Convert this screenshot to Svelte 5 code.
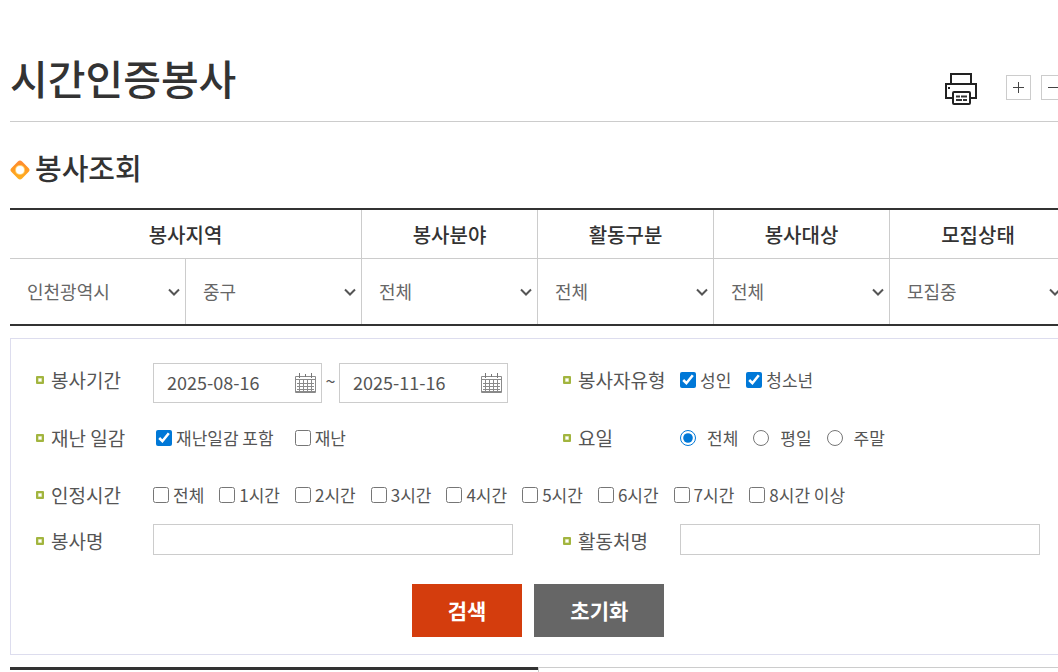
<script>
  const groups = [
    { title: '봉사지역', span: 2 },
    { title: '봉사분야', span: 1 },
    { title: '활동구분', span: 1 },
    { title: '봉사대상', span: 1 },
    { title: '모집상태', span: 1 }
  ]

  const filters = [
    { label: '시도', value: '인천광역시' },
    { label: '시군구', value: '중구' },
    { label: '봉사분야', value: '전체' },
    { label: '활동구분', value: '전체' },
    { label: '봉사대상', value: '전체' },
    { label: '모집상태', value: '모집중' }
  ]

  const hours = ['전체', '1시간', '2시간', '3시간', '4시간', '5시간', '6시간', '7시간', '8시간 이상']
  const days = ['전체', '평일', '주말']

  let startDate = $state('2025-08-16')
  let endDate = $state('2025-11-16')
  let day = $state('전체')
  let activityName = $state('')
  let placeName = $state('')
</script>

{#snippet bullet()}
  <svg width="8" height="8" viewBox="0 0 8 8" aria-hidden="true">
    <rect width="8" height="8" rx="1" fill="#a2b53f" />
    <rect x="2" y="2" width="4" height="4" rx="1" fill="#dfe6b8" />
    <rect x="3" y="3" width="2" height="2" fill="#fff" />
  </svg>
{/snippet}

{#snippet calendar()}
  <svg width="21" height="20" viewBox="0 0 21 20" fill="none" stroke="#8a8a8a" aria-hidden="true">
    <path d="M0.5 3.5h20v16h-20z" />
    <path d="M0 6.5h21M2 10.5h17M2 13.5h17M2 16.5h17M0 18.5h21" />
    <path d="M4.5 7v12M8.5 7v12M12.5 7v12M16.5 7v12" />
    <path d="M4.5 0v5M16.5 0v5M10.5 1v3" stroke="#777" />
  </svg>
{/snippet}

{#snippet check(text, checked)}
  <label class="choice">
    <input type="checkbox" {checked} />
    <span>{text}</span>
  </label>
{/snippet}

<div class="page">
  <main>
    <header>
      <h1>시간인증봉사</h1>
      <div class="tools">
        <button class="print" aria-label="인쇄">
          <svg width="34" height="38" viewBox="0 0 34 38" fill="none" stroke="#222" stroke-width="2" aria-hidden="true">
            <path d="M7 16V6h20v10" />
            <path d="M8 30H2V16h30v14h-6" />
            <rect x="9" y="24" width="17" height="12" rx="1" />
            <path d="M4 20h2" />
            <path d="M12 28.5h4M17 28.5h6M12 32h6M19 32h4" stroke="#333" />
          </svg>
        </button>
        <button class="zoom" aria-label="확대">
          <svg width="13" height="13" viewBox="0 0 13 13" stroke="#444" aria-hidden="true">
            <path d="M1 6.5h11M6.5 1v11" />
          </svg>
        </button>
        <button class="zoom" aria-label="축소">
          <svg width="13" height="13" viewBox="0 0 13 13" stroke="#444" aria-hidden="true">
            <path d="M1 6.5h11" />
          </svg>
        </button>
      </div>
    </header>

    <h2>
      <svg width="20" height="20" viewBox="0 0 20 20" aria-hidden="true">
        <defs>
          <linearGradient id="diamond" x1="0" y1="0" x2="1" y2="1">
            <stop offset="0" stop-color="#ff8a3c" />
            <stop offset="0.3" stop-color="#ff9226" />
            <stop offset="1" stop-color="#ffb41e" />
          </linearGradient>
        </defs>
        <rect x="2.5" y="2.5" width="15" height="15" rx="3" transform="rotate(45 10 10)" fill="url(#diamond)" />
        <circle cx="10" cy="10" r="5" fill="#ffd66e" />
        <circle cx="10" cy="10" r="4" fill="#fff" />
      </svg>
      봉사조회
    </h2>

    <table>
      <thead>
        <tr>
          {#each groups as group}
            <th colspan={group.span} scope="colgroup">{group.title}</th>
          {/each}
        </tr>
      </thead>
      <tbody>
        <tr>
          {#each filters as filter}
            <td>
              <div class="select">
                <select aria-label={filter.label}>
                  <option>{filter.value}</option>
                </select>
                <svg width="12" height="8" viewBox="0 0 12 8" fill="none" stroke="#555" stroke-width="2" aria-hidden="true">
                  <path d="M1 1.5l5 5 5-5" />
                </svg>
              </div>
            </td>
          {/each}
        </tr>
      </tbody>
    </table>

    <form onsubmit={(e) => e.preventDefault()}>
      <div class="row dates">
        <div class="field">
          <label class="name" for="start">{@render bullet()}봉사기간</label>
          <div class="period">
            <div class="date">
              <input id="start" type="text" bind:value={startDate} />
              <button type="button" aria-label="시작일 선택">{@render calendar()}</button>
            </div>
            <span class="tilde">~</span>
            <div class="date">
              <input type="text" aria-label="종료일" bind:value={endDate} />
              <button type="button" aria-label="종료일 선택">{@render calendar()}</button>
            </div>
          </div>
        </div>
        <div class="field" role="group" aria-labelledby="type">
          <span class="name" id="type">{@render bullet()}봉사자유형</span>
          <div class="choices">
            {@render check('성인', true)}
            {@render check('청소년', true)}
          </div>
        </div>
      </div>

      <div class="row disaster">
        <div class="field" role="group" aria-labelledby="disaster">
          <span class="name" id="disaster">{@render bullet()}재난 일감</span>
          <div class="choices inset">
            {@render check('재난일감 포함', true)}
            {@render check('재난', false)}
          </div>
        </div>
        <div class="field" role="group" aria-labelledby="day">
          <span class="name" id="day">{@render bullet()}요일</span>
          <div class="choices">
            {#each days as item}
              <label class="choice radio">
                <input type="radio" name="day" value={item} bind:group={day} />
                <span>{item}</span>
              </label>
            {/each}
          </div>
        </div>
      </div>

      <div class="field hours" role="group" aria-labelledby="hours">
        <span class="name" id="hours">{@render bullet()}인정시간</span>
        <div class="choices">
          {#each hours as hour}
            {@render check(hour, false)}
          {/each}
        </div>
      </div>

      <div class="row">
        <div class="field">
          <label class="name" for="activity">{@render bullet()}봉사명</label>
          <input class="text" id="activity" type="text" bind:value={activityName} />
        </div>
        <div class="field">
          <label class="name" for="place">{@render bullet()}활동처명</label>
          <input class="text" id="place" type="text" bind:value={placeName} />
        </div>
      </div>

      <div class="buttons">
        <button type="submit" class="search">검색</button>
        <button type="reset" class="reset">초기화</button>
      </div>
    </form>

    <div class="tabs">
      <div class="tab active"></div>
      <div class="tab"></div>
    </div>
  </main>
</div>

<style>
  :global(body) {
    margin: 0;
    background: #fff;
  }

  .page {
    overflow: hidden;
    font-family: 'Noto Sans CJK KR', 'Noto Sans', sans-serif;
    font-size: 18px;
    color: #555;
  }

  /* the content runs a little past the right edge of the window */
  main {
    margin: 0 -8px 0 10px;
  }

  button,
  input,
  select {
    box-sizing: border-box;
    margin: 0;
    padding: 0;
    border: 0;
    background: none;
    font: inherit;
    color: inherit;
  }

  button {
    cursor: pointer;
  }

  svg {
    display: block;
    flex: none;
  }

  header {
    display: flex;
    align-items: flex-end;
    justify-content: space-between;
    padding-top: 45px;
    border-bottom: 1px solid #ccc;
  }

  h1 {
    margin: 0 0 12px;
    font-size: 41px;
    font-weight: 500;
    line-height: 64px;
    color: #333;
  }

  .tools {
    display: flex;
    align-items: center;
    gap: 10px;
    margin-bottom: 15px;
  }

  .print {
    margin-right: 18px;
  }

  .zoom {
    display: flex;
    align-items: center;
    justify-content: center;
    width: 25px;
    height: 25px;
    border: 1px solid #ccc;
  }

  h2 {
    display: flex;
    align-items: baseline;
    gap: 5px;
    margin: 24px 0 20px;
    font-size: 29px;
    font-weight: 500;
    line-height: 42px;
    color: #333;
  }

  table {
    width: 100%;
    table-layout: fixed;
    border-collapse: separate;
    border-spacing: 0;
    border-top: 2px solid #333;
    border-bottom: 2px solid #333;
  }

  th,
  td {
    padding: 0;
    border-right: 1px solid #ccc;
  }

  th:last-child,
  td:last-child {
    border-right: 0;
  }

  th {
    height: 48px;
    border-bottom: 1px solid #ccc;
    font-size: 20px;
    font-weight: 500;
    color: #333;
  }

  td {
    height: 65px;
  }

  .select {
    display: grid;
    align-items: center;
  }

  .select select,
  .select svg {
    grid-area: 1 / 1;
  }

  .select select {
    appearance: none;
    width: 100%;
    height: 40px;
    padding: 0 0 2px 17px;
    border-radius: 0;
    color: #666;
  }

  .select svg {
    justify-self: end;
    margin-right: 5px;
    pointer-events: none;
  }

  form {
    margin-top: 12px;
    padding: 24px 25px 17px;
    border: 1px solid #dde;
  }

  .row {
    display: grid;
    grid-template-columns: 1fr 1fr;
    column-gap: 50px;
  }

  .dates {
    margin-bottom: 18px;
  }

  .disaster {
    margin-bottom: 23px;
  }

  .hours {
    margin-bottom: 12px;
  }

  .field {
    display: flex;
    align-items: flex-start;
    line-height: 34px;
  }

  .name {
    display: flex;
    align-items: center;
    gap: 7px;
    flex: 0 0 117px;
    font-size: 19px;
    white-space: nowrap;
  }

  .period {
    display: flex;
  }

  .date {
    box-sizing: border-box;
    display: flex;
    align-items: center;
    width: 169px;
    height: 40px;
    padding: 0 5px 0 13px;
    border: 1px solid #ccc;
  }

  .date input {
    flex: 1;
    min-width: 0;
    padding-bottom: 2px;
  }

  .tilde {
    width: 17px;
    text-align: center;
  }

  .choices {
    display: flex;
    gap: 15px;
    font-size: 17px;
    white-space: nowrap;
  }

  .inset {
    margin-left: 3px;
    gap: 21px;
  }

  .choice {
    display: flex;
    align-items: center;
    gap: 4px;
  }

  .radio {
    gap: 11px;
  }

  .choice input {
    width: 16px;
    height: 16px;
    accent-color: #0078d7;
  }

  .text {
    flex: 1;
    min-width: 0;
    height: 31px;
    padding: 0 8px;
    border: 1px solid #ccc;
  }

  .buttons {
    display: flex;
    justify-content: center;
    gap: 12px;
    margin-top: 26px;
  }

  .buttons button {
    height: 53px;
    padding: 0 36px 2px;
    font-size: 21px;
    font-weight: 700;
    color: #fff;
  }

  .search {
    background: #d43d0d;
  }

  .reset {
    background: #666;
  }

  .tabs {
    display: flex;
    margin-top: 12px;
  }

  .tab {
    box-sizing: border-box;
    flex: 1;
    height: 5px;
    border-top: 1px solid #ccc;
    border-left: 1px solid #ccc;
  }

  .active {
    border-top: 3px solid #333;
    border-left: 0;
  }
</style>
